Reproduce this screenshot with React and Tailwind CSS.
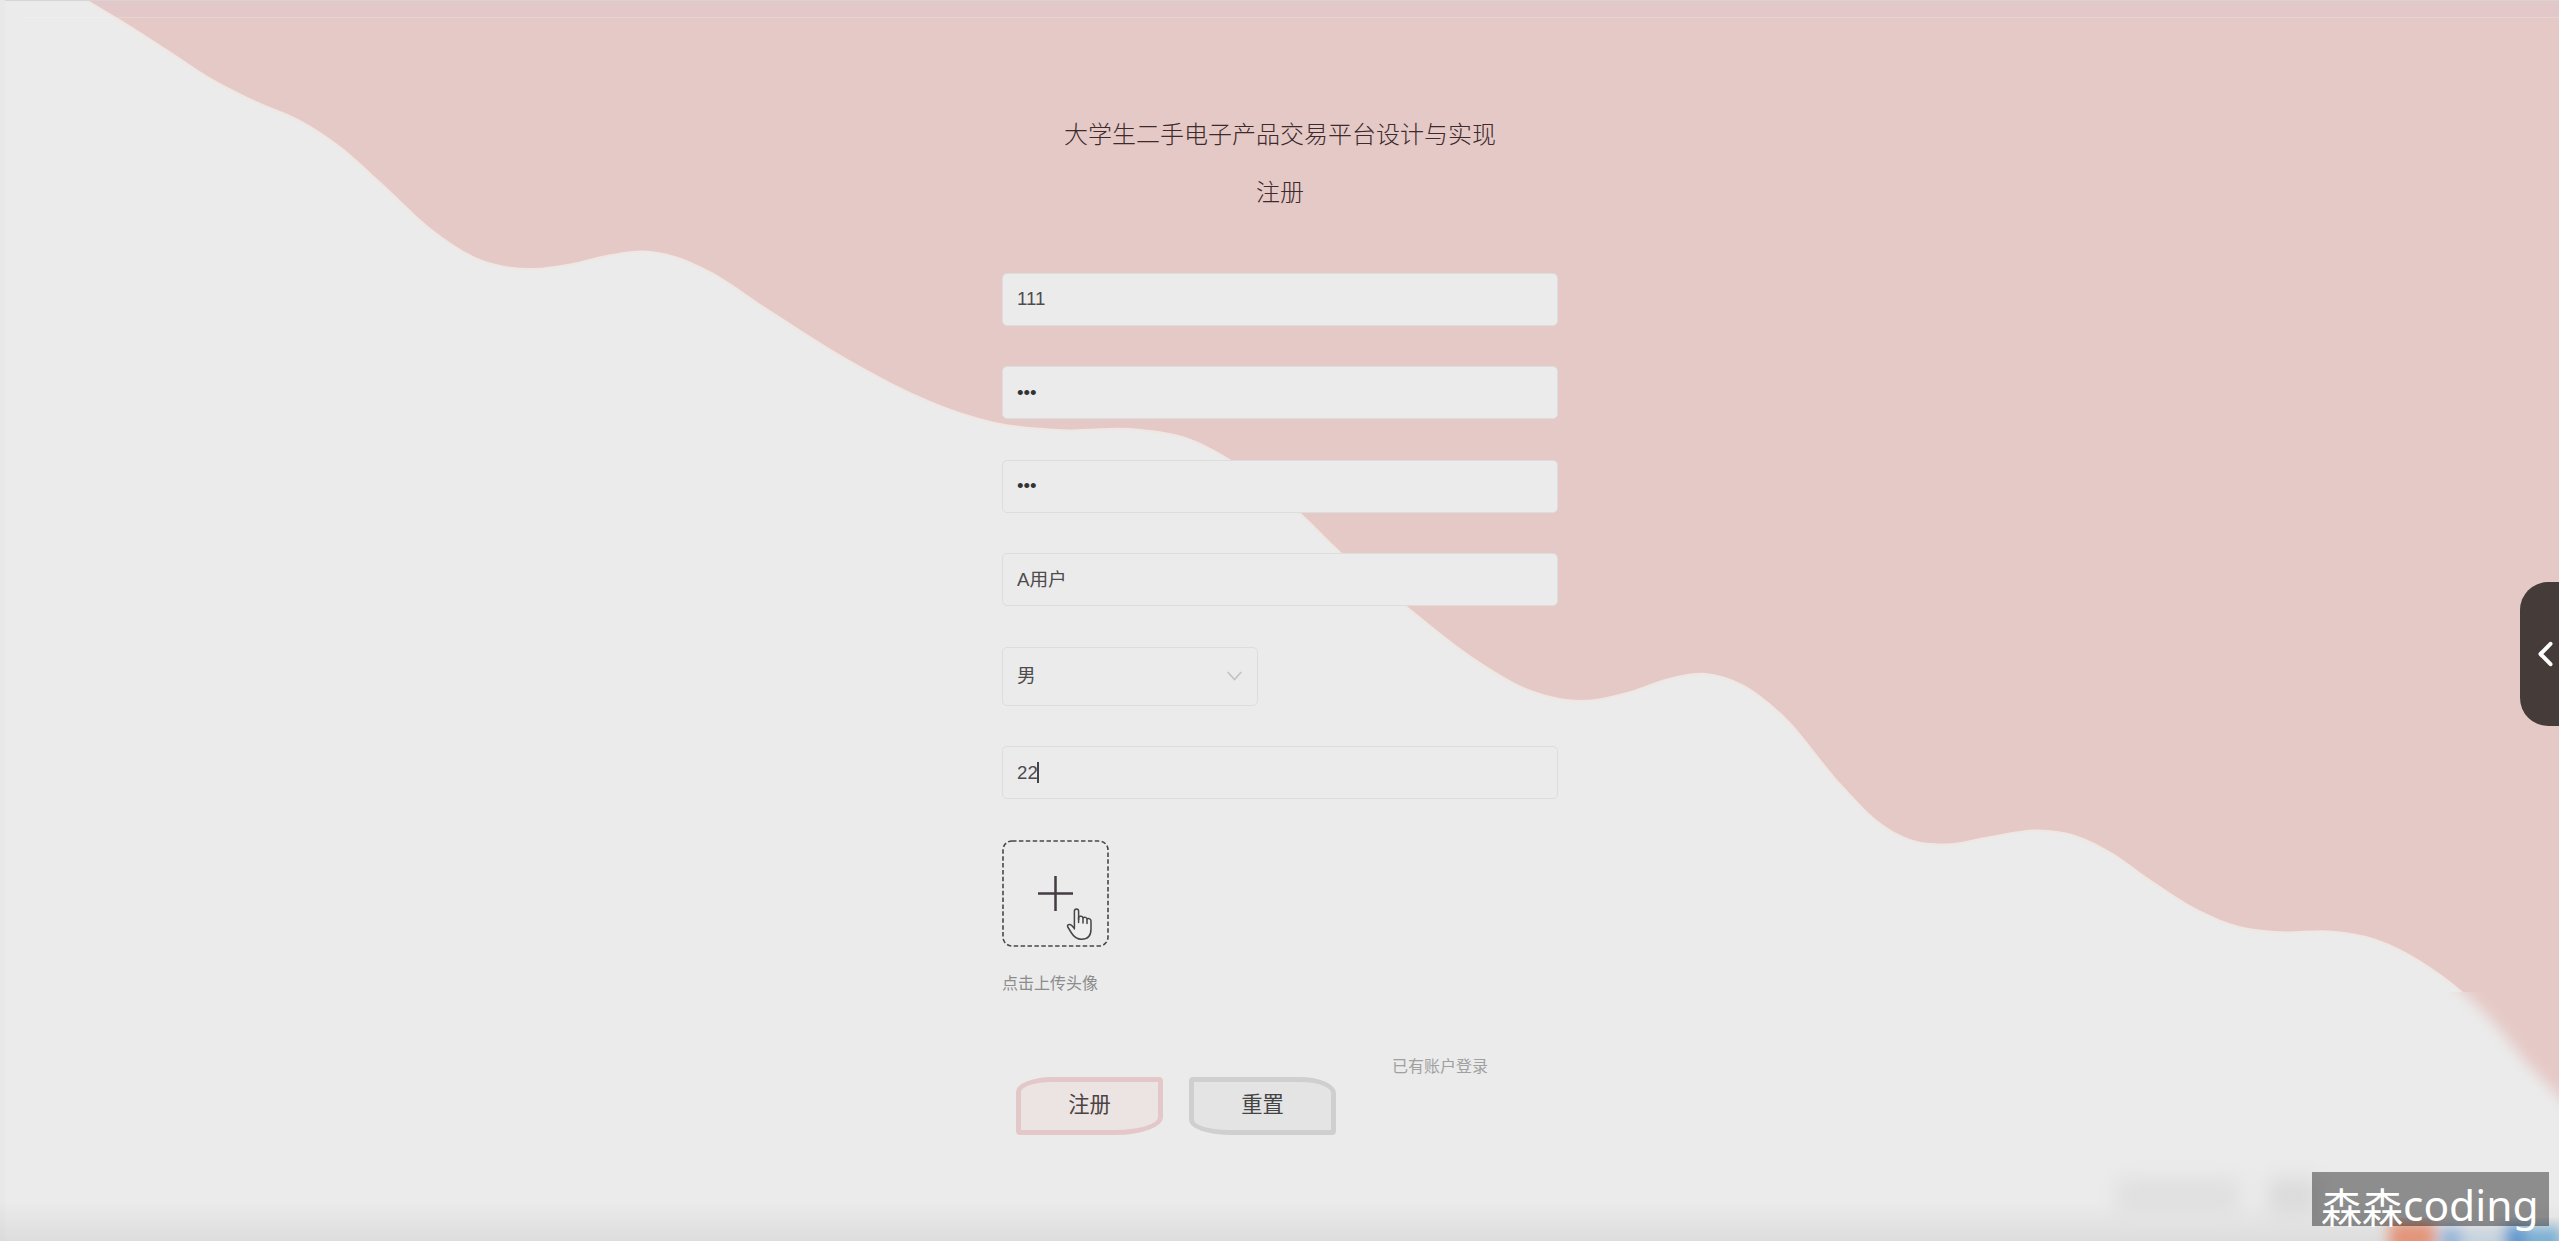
import React from 'react';

const EDGE = [
  [60, -16], [88, 0], [118, 18], [165, 48], [211, 78], [256, 101], [302, 121], [340, 146], [384, 185],
  [433, 230], [480, 259], [527, 268], [570, 263.5], [609, 254.5], [643, 250.5], [675, 256], [708, 270],
  [768, 309], [860, 366], [928, 400], [995, 422], [1057, 429], [1141, 429], [1187, 437.5], [1233, 461],
  [1301, 513], [1342, 553], [1408, 607], [1474, 658], [1531, 690], [1581, 700], [1629, 691.5],
  [1669, 678], [1705, 673], [1742, 684], [1782, 714], [1842, 785], [1878, 821], [1910, 839],
  [1946, 843.5], [1991, 836], [2039, 829.5], [2075, 835], [2111, 852], [2151, 880], [2199, 910],
  [2239, 926], [2275, 931], [2336, 931], [2376, 939], [2424, 963], [2463, 992], [2496, 1025],
  [2526, 1062], [2559, 1096], [2600, 1136],
];

// Cubic curve through the points with slopes weighted by horizontal spacing.
function smooth(points) {
  const last = points.length - 1;
  const secant = (i) => (points[i + 1][1] - points[i][1]) / (points[i + 1][0] - points[i][0]);
  const slopes = points.map((p, i) => {
    if (i === 0) return secant(0);
    if (i === last) return secant(last - 1);
    const before = p[0] - points[i - 1][0];
    const after = points[i + 1][0] - p[0];
    return (secant(i - 1) * after + secant(i) * before) / (before + after);
  });
  let d = `M${points[0][0]} ${points[0][1]}`;
  for (let i = 0; i < last; i++) {
    const [x1, y1] = points[i];
    const [x2, y2] = points[i + 1];
    const third = (x2 - x1) / 3;
    d += `C${x1 + third} ${y1 + slopes[i] * third} ${x2 - third} ${y2 - slopes[i + 1] * third} ${x2} ${y2}`;
  }
  return `${d}L2620 1136L2620 -16Z`;
}

const WAVE = smooth(EDGE);

function Backdrop() {
  return (
    <svg className="absolute inset-0 h-[1241px] w-[2559px]" viewBox="0 0 2559 1241" aria-hidden="true">
      <defs>
        <clipPath id="upper"><rect width="2559" height="992" /></clipPath>
        <clipPath id="lower"><rect y="992" width="2559" height="249" /></clipPath>
        <clipPath id="page"><rect width="2559" height="1241" /></clipPath>
        <filter id="soft" x="-10%" y="-10%" width="120%" height="120%"><feGaussianBlur stdDeviation="7" /></filter>
        <filter id="softer" x="-20%" y="-50%" width="140%" height="200%"><feGaussianBlur stdDeviation="10" /></filter>
        <linearGradient id="shade" x1="0" y1="0" x2="0" y2="1">
          <stop offset="0" stopColor="#000" stopOpacity="0" />
          <stop offset="1" stopColor="#000" stopOpacity="0.06" />
        </linearGradient>
      </defs>
      <g clipPath="url(#upper)">
        <path d={WAVE} fill="none" stroke="#f0e6e2" strokeWidth="4" />
        <path d={WAVE} fill="#e5c9c6" />
      </g>
      <g clipPath="url(#lower)"><path d={WAVE} fill="#e5c9c6" filter="url(#soft)" /></g>
      <path d="M88 0L118 18H2559V0Z" fill="#e2c8c9" />
      <rect x="20" y="17" width="2539" height="1" fill="#fff" fillOpacity="0.18" />
      <rect width="2559" height="1" fill="#d9d4d4" />
      <rect width="5" height="1241" fill="#e8e8e8" />
      <rect y="1201" width="2559" height="40" fill="url(#shade)" />
      <g filter="url(#softer)">
        <rect x="2116" y="1178" width="124" height="38" fill="#e0e0e0" />
        <rect x="2268" y="1178" width="50" height="38" fill="#dbdbdb" />
      </g>
      <g filter="url(#soft)" clipPath="url(#page)">
        <rect x="2389" y="1222" width="46" height="40" fill="#e3957a" />
        <rect x="2441" y="1228" width="20" height="30" fill="#8fb2da" />
        <rect x="2462" y="1230" width="42" height="30" fill="#c5d3df" />
        <rect x="2505" y="1225" width="22" height="36" fill="#5f97d0" />
        <rect x="2528" y="1227" width="34" height="32" fill="#7cb0d4" />
      </g>
    </svg>
  );
}

function Field({ children, className = '' }) {
  return (
    <div className={`mb-[40.5px] flex h-[53px] w-[556px] items-center rounded-[5px] border border-[#dcdddd] bg-[#ebebeb] px-[14px] text-[18.67px] text-[#4d4b4d] ${className}`}>
      {children}
    </div>
  );
}

function HandCursor() {
  return (
    <svg className="absolute left-[64px] top-[67px] h-[34px] w-[27px]" viewBox="0 0 27 34" fill="#efefef" stroke="#454545" strokeWidth="1.5" strokeLinejoin="round" strokeLinecap="round">
      <path d="M8.4 22V4.2C8.4 1.2 12.6 1.2 12.6 4.2V12.4V9.8C14 8.8 16.6 9 17 10.8C18.600 9.800 20.500 10.300 21 11.800C23 11 25 12 25 14V22C25 29 21 32.300 15.500 32.300C11 32.300 8 30 5.500 26L1.800 20C.8 17.800 3.500 16.500 5.500 18.300L8.400 21.600" />
      <path d="M12.600 10V15.500M17 11V16M21 12V16.500" fill="none" />
    </svg>
  );
}

export default function App() {
  return (
    <div className="relative h-[1241px] w-[2559px] overflow-hidden bg-[#ebebeb] font-['Liberation_Sans','Noto_Sans_CJK_SC',sans-serif]">
      <Backdrop />
      <main className="relative ml-[1002px] flex w-[556px] flex-col pt-[117px]">
        <h1 className="h-[36px] text-center text-[24px] leading-[36px] font-light text-[#3c2a2c]">大学生二手电子产品交易平台设计与实现</h1>
        <h2 className="mt-[22px] mb-[61.5px] h-[36px] text-center text-[24px] leading-[36px] font-light text-[#3c2a2c]">注册</h2>
        <Field>111</Field>
        <Field className="text-[#333336]">•••</Field>
        <Field className="text-[#333336]">•••</Field>
        <Field>A用户</Field>
        <div className="mb-[40.5px] flex h-[59px] w-[256px] items-center justify-between rounded-[5px] border border-[#dcdddd] pr-[15px] pl-[14px] text-[18.67px] text-[#4d4b4d]">
          男
          <svg className="h-[10px] w-[15px]" viewBox="0 0 15 10" fill="none" stroke="#c2c2c2" strokeWidth="1.6"><path d="M.7 1L7.500 8.500L14.300 1" /></svg>
        </div>
        <Field>22<span className="-ml-px h-[21px] w-[2px] bg-[#444]" /></Field>
        <div className="relative flex h-[107px] w-[107px] items-center justify-center">
          <svg className="absolute inset-0 h-[107px] w-[107px]" viewBox="0 0 107 107" fill="none" stroke="#484848" strokeWidth="1.6" strokeDasharray="4.500 2.400"><rect x="1" y="1" width="105" height="105" rx="9" /></svg>
          <svg className="h-[35px] w-[35px]" viewBox="0 0 35 35" stroke="#443c42" strokeWidth="2.500"><path d="M17.500 0V35M0 17.500H35" /></svg>
          <HandCursor />
        </div>
        <p className="mt-[25px] h-[24px] text-[16px] leading-[24px] text-[#8c8c8c]">点击上传头像</p>
        <div className="mt-[59px] flex">
          <button className="mt-[22px] ml-[14px] h-[58px] w-[147px] rounded-[36px_4px_48px_4px/15px_4px_18px_4px] border-[5px] border-[#e4c7c8] bg-[#ebe4e3] pt-px text-[21.33px] text-[#4b4242]">注册</button>
          <button className="mt-[22px] ml-[26px] h-[58px] w-[147px] rounded-[4px_36px_4px_40px/4px_16px_4px_15px] border-[5px] border-[#cfcfcf] bg-[#e4e4e4] pt-px text-[21.33px] text-[#444]">重置</button>
          <a className="ml-[56px] h-[24px] text-[16px] leading-[24px] text-[#a0a0a0]">已有账户登录</a>
        </div>
      </main>
      <aside className="absolute top-[582px] right-0 flex h-[144px] w-[39px] items-center rounded-l-[28px] bg-[#453c3a] pl-[17px]">
        <svg className="h-[26px] w-[16px]" viewBox="0 0 16 26" fill="none" stroke="#fff" strokeWidth="4" strokeLinecap="round" strokeLinejoin="round"><path d="M13.500 2.800L3.500 13L13.500 23.200" /></svg>
      </aside>
      <div className="absolute top-[1172px] left-[2312px] flex h-[54px] w-[237px] items-center bg-black/40 pt-[13px] pl-[9px] leading-none whitespace-nowrap text-white">
        <span className="font-['Noto_Sans_CJK_SC',sans-serif] text-[41px]">森森</span>
        <span className="font-['Noto_Sans',sans-serif] text-[42.500px]">coding</span>
      </div>
    </div>
  );
}
